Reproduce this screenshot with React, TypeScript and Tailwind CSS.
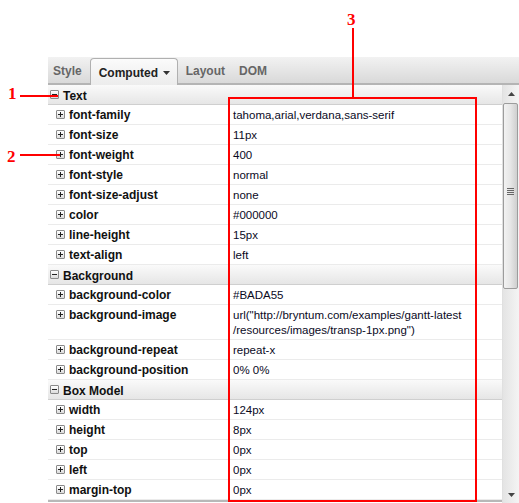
import React from "react";

type Row = { name: string; value: string[] };
type Group = { title: string; rows: Row[] };

const groups: Group[] = [
  {
    title: "Text",
    rows: [
      { name: "font-family", value: ["tahoma,arial,verdana,sans-serif"] },
      { name: "font-size", value: ["11px"] },
      { name: "font-weight", value: ["400"] },
      { name: "font-style", value: ["normal"] },
      { name: "font-size-adjust", value: ["none"] },
      { name: "color", value: ["#000000"] },
      { name: "line-height", value: ["15px"] },
      { name: "text-align", value: ["left"] },
    ],
  },
  {
    title: "Background",
    rows: [
      { name: "background-color", value: ["#BADA55"] },
      {
        name: "background-image",
        value: [
          'url("http://bryntum.com/examples/gantt-latest',
          '/resources/images/transp-1px.png")',
        ],
      },
      { name: "background-repeat", value: ["repeat-x"] },
      { name: "background-position", value: ["0% 0%"] },
    ],
  },
  {
    title: "Box Model",
    rows: [
      { name: "width", value: ["124px"] },
      { name: "height", value: ["8px"] },
      { name: "top", value: ["0px"] },
      { name: "left", value: ["0px"] },
      { name: "margin-top", value: ["0px"] },
    ],
  },
];

function Expander({ open }: { open?: boolean }) {
  return (
    <span className="relative block w-[9px] h-[9px] shrink-0 border border-[#8a8a8a] rounded-[1px] bg-gradient-to-b from-white to-[#dcdcdc]">
      <span className="absolute left-[1px] top-[3px] w-[5px] h-[1px] bg-[#222]" />
      {!open && (
        <span className="absolute left-[3px] top-[1px] w-[1px] h-[5px] bg-[#222]" />
      )}
    </span>
  );
}

function Scrollbar() {
  return (
    <div className="w-[17px] shrink-0 flex flex-col bg-gradient-to-r from-[#e4e4e4] to-[#f4f4f4] border-l border-[#e0e0e0]">
      <div className="h-[17px] flex items-center justify-center">
        <svg width="7" height="4" viewBox="0 0 7 4">
          <path d="M0 4 L3.5 0 L7 4 Z" fill="#444" />
        </svg>
      </div>
      <div className="mt-[1px] h-[186px] w-[15px] border border-[#9c9c9c] rounded-[2px] bg-gradient-to-r from-[#f2f2f2] via-[#e6e6e6] to-[#cfcfcf] flex items-center justify-center">
        <div className="flex flex-col gap-[1px] mt-[-10px]">
          <span className="w-[7px] h-[1px] bg-[#666]" />
          <span className="w-[7px] h-[1px] bg-[#666]" />
          <span className="w-[7px] h-[1px] bg-[#666]" />
          <span className="w-[7px] h-[1px] bg-[#666]" />
        </div>
      </div>
      <div className="flex-1" />
      <div className="h-[17px] flex items-center justify-center">
        <svg width="7" height="4" viewBox="0 0 7 4">
          <path d="M0 0 L3.5 4 L7 0 Z" fill="#444" />
        </svg>
      </div>
    </div>
  );
}

export default function App() {
  return (
    <div
      className="relative w-[519px] h-[503px] bg-white overflow-hidden"
      style={{ fontFamily: '"Liberation Sans", Arial, sans-serif' }}
    >
      {/* Panel */}
      <div className="ml-[48px] mt-[57px] w-[471px]">
        {/* Tabs */}
        <div className="h-[28px] flex items-end bg-gradient-to-b from-[#f2f2f2] to-[#d9d9d9] border-b-2 border-[#b4b4b4] text-[12px] font-bold">
          <div className="h-[27px] px-[5px] pt-[2px] flex items-center text-[#666]">Style</div>
          <div className="ml-[3px] h-[27px] w-[88px] flex items-center pl-[8px] gap-[5px] bg-gradient-to-b from-[#fbfbfb] to-[#ececec] border border-b-0 border-[#b0b0b0] rounded-t-[4px] text-[#222] mb-[-2px] pt-[1px]">
            Computed
            <svg width="7" height="4" viewBox="0 0 7 4">
              <path d="M0 0 L3.5 4 L7 0 Z" fill="#333" />
            </svg>
          </div>
          <div className="h-[27px] ml-[8px] pt-[2px] flex items-center text-[#666]">Layout</div>
          <div className="h-[27px] ml-[14px] pt-[2px] flex items-center text-[#666]">DOM</div>
        </div>

        <div className="flex h-[418px]">
          <div className="flex-1">
            <div className="border-b-2 border-[#b8b8b8]">
              {groups.map((g) => (
                <div key={g.title}>
                  <div className="h-[20px] flex items-center gap-[4px] pl-[2px] bg-gradient-to-b from-[#fafafa] to-[#e6e6e6] border-b border-[#cfcfcf] text-[12px] font-bold text-[#111]">
                    <Expander open />
                    <span className="mt-[2px]">{g.title}</span>
                  </div>
                  {g.rows.map((r) => (
                    <div
                      key={r.name}
                      className="flex border-b border-[#ebebeb] leading-[15px]"
                    >
                      <div className="w-[180px] shrink-0 h-[19px] flex items-center gap-[4px] pl-[8px] text-[12px] font-bold text-[#111]">
                        <Expander />
                        <span className="mt-[2px]">{r.name}</span>
                      </div>
                      <div className="flex-1 pl-[5px] pt-[3px] pb-[1px] text-[11.5px] text-[#0a0a1e]">
                        {r.value.map((v) => (
                          <div key={v}>{v}</div>
                        ))}
                      </div>
                    </div>
                  ))}
                </div>
              ))}
            </div>
          </div>
          <Scrollbar />
        </div>
      </div>

      {/* Annotations */}
      <div className="absolute left-[228px] top-[97px] w-[249px] h-[405px] border-2 border-[#ff0000]" />
      <div className="absolute left-[352px] top-[28px] w-[2px] h-[70px] bg-[#ff0000]" />
      <div
        className="absolute left-[347px] top-[11px] text-[17px] font-bold text-[#ff0000] leading-none"
        style={{ fontFamily: '"Liberation Serif", serif' }}
      >
        3
      </div>
      <div className="absolute left-[20px] top-[95px] w-[38px] h-[2px] bg-[#ff0000]" />
      <div
        className="absolute left-[8px] top-[85px] text-[17px] font-bold text-[#ff0000] leading-none"
        style={{ fontFamily: '"Liberation Serif", serif' }}
      >
        1
      </div>
      <div className="absolute left-[20px] top-[154px] w-[40px] h-[2px] bg-[#ff0000]" />
      <div
        className="absolute left-[7px] top-[148px] text-[17px] font-bold text-[#ff0000] leading-none"
        style={{ fontFamily: '"Liberation Serif", serif' }}
      >
        2
      </div>
    </div>
  );
}
